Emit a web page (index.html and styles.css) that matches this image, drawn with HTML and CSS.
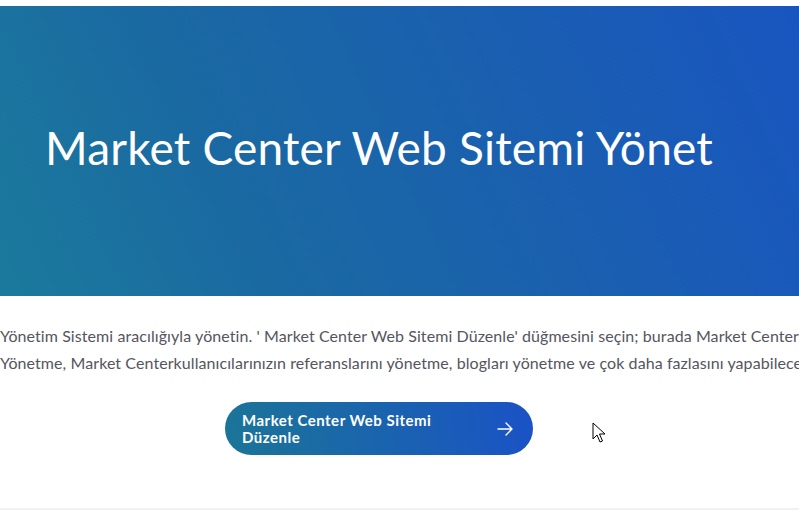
FILE: index.html
```html
<!DOCTYPE html>
<html lang="tr">
<head>
<meta charset="utf-8">
<link rel="stylesheet" href="styles.css">
</head>
<body>
<div class="page">
  <section class="hero">
    <h1 class="hero-title">Market Center Web Sitemi Yönet</h1>
  </section>
  <section class="content">
    <p class="lead">Yönetim Sistemi aracılığıyla yönetin. ' Market Center Web Sitemi Düzenle' düğmesini seçin; burada Market Center<br>Yönetme, Market Centerkullanıcılarınızın referanslarını yönetme, blogları yönetme ve çok daha fazlasını yapabilece</p>
    <div class="actions">
      <a class="btn" href="#">
        <span class="btn-label">Market Center Web Sitemi<br>Düzenle</span>
        <svg class="btn-arrow" width="16" height="14" viewBox="0 0 16 14" fill="none" stroke="#fff" stroke-width="1.4" stroke-linecap="round" stroke-linejoin="round"><path d="M1 7h14M9 1l6 6-6 6"/></svg>
      </a>
      <svg class="cursor" width="14" height="22" viewBox="0 0 14 22"><path d="M1 1v16l4-4 3 7 2.5-1-3-7h5.5z" fill="#fff" stroke="#000" stroke-width="1" stroke-linejoin="round"/></svg>
    </div>
  </section>
  <div class="rule"></div>
</div>
</body>
</html>
```
FILE: styles.css
```css
html, body {
  margin: 0;
  padding: 0;
  background: #fff;
}
body {
  font-family: "Lato", "Open Sans", sans-serif;
  overflow: hidden;
}
.page {
  width: 799px;
  height: 510px;
  padding-top: 6px;
  box-sizing: border-box;
  display: flex;
  flex-direction: column;
}
.hero {
  height: 290px;
  display: flex;
  align-items: center;
  padding-left: 45px;
  background: linear-gradient(65deg, #1b7a9c 0%, #1a69a2 30%, #1a5fb0 65%, #1955c0 100%);
}
.hero-title {
  margin: 0 0 8px 0;
  color: #fff;
  font-weight: 400;
  font-size: 46px;
  letter-spacing: 0.2px;
}
.content {
  flex: 1;
  overflow: hidden;
}
.lead {
  margin: 26px 0 0 0;
  white-space: nowrap;
  overflow: hidden;
  font-size: 16px;
  letter-spacing: 0.08px;
  line-height: 27px;
  color: #555560;
}
.actions {
  position: relative;
  margin-top: 26px;
  padding-left: 225px;
}
.btn {
  width: 308px;
  height: 53px;
  box-sizing: border-box;
  border-radius: 27px;
  padding: 0 20px 0 17px;
  display: flex;
  align-items: center;
  justify-content: space-between;
  text-decoration: none;
  color: #fff;
  background: linear-gradient(80deg, #1b7597 0%, #1a62b0 55%, #1a52c6 100%);
}
.btn-label {
  font-weight: 700;
  font-size: 15px;
  letter-spacing: 0.5px;
  line-height: 17px;
}
.cursor {
  position: absolute;
  left: 592px;
  top: 20px;
}
.rule {
  height: 2px;
  background: #f1f1f1;
}
```
